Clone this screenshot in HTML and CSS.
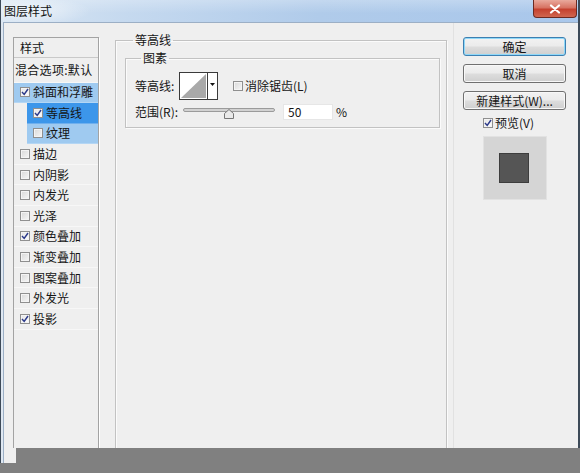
FILE: index.html
```html
<!DOCTYPE html>
<html lang="zh">
<head>
<meta charset="utf-8">
<title>图层样式</title>
<link rel="stylesheet" href="styles.css">
</head>
<body>
<div class="win">
  <div class="titlebar">
    <span class="title">图层样式</span>
    <span class="close"><svg width="12" height="10" viewBox="0 0 12 10"><path d="M2 1.5 L10 8.5 M10 1.5 L2 8.5" stroke="#fff" stroke-width="2.2" stroke-linecap="round"/></svg></span>
  </div>
  <div class="client">
    <div class="list">
      <div class="row head">样式</div>
      <div class="row blend">混合选项:默认</div>
      <div class="row sel-light"><span class="cb on"><svg width="8" height="8" viewBox="0 0 8 8"><path d="M1 4 L3.2 6.4 L7 1" fill="none" stroke="#2c3a8a" stroke-width="1.5"/></svg></span>斜面和浮雕</div>
      <div class="row sub sel-dark"><span class="cb on"><svg width="8" height="8" viewBox="0 0 8 8"><path d="M1 4 L3.2 6.4 L7 1" fill="none" stroke="#2c3a8a" stroke-width="1.5"/></svg></span>等高线</div>
      <div class="row sub sel-light"><span class="cb"></span>纹理</div>
      <div class="row"><span class="cb"></span>描边</div>
      <div class="row"><span class="cb"></span>内阴影</div>
      <div class="row"><span class="cb"></span>内发光</div>
      <div class="row"><span class="cb"></span>光泽</div>
      <div class="row"><span class="cb on"><svg width="8" height="8" viewBox="0 0 8 8"><path d="M1 4 L3.2 6.4 L7 1" fill="none" stroke="#2c3a8a" stroke-width="1.5"/></svg></span>颜色叠加</div>
      <div class="row"><span class="cb"></span>渐变叠加</div>
      <div class="row"><span class="cb"></span>图案叠加</div>
      <div class="row"><span class="cb"></span>外发光</div>
      <div class="row"><span class="cb on"><svg width="8" height="8" viewBox="0 0 8 8"><path d="M1 4 L3.2 6.4 L7 1" fill="none" stroke="#2c3a8a" stroke-width="1.5"/></svg></span>投影</div>
    </div>

    <fieldset class="grp outer">
      <legend>等高线</legend>
      <fieldset class="grp inner">
        <legend>图素</legend>
        <div class="line first">
          <span class="lbl">等高线:</span>
          <span class="contour">
            <svg width="39" height="28" viewBox="0 0 39 28">
              <rect x="0.5" y="0.5" width="38" height="27" fill="#fff" stroke="#3a3a3a"/>
              <polygon points="2,26 27,2 27,26" fill="#a9a9a9"/>
              <line x1="28.5" y1="1" x2="28.5" y2="27" stroke="#3a3a3a"/>
              <polygon points="31,11 36,11 33.5,14" fill="#111"/>
            </svg>
          </span>
          <span class="chk"><span class="cb"></span>消除锯齿(L)</span>
        </div>
        <div class="line second">
          <span class="lbl lbl2">范围(R):</span>
          <svg class="slider" width="92" height="16" viewBox="0 0 92 16">
            <rect x="0.5" y="4.5" width="91" height="3" rx="1.5" fill="#d2d2d2" stroke="#9b9b9b"/>
            <polygon points="41.5,14.5 41.5,9.5 46,5.5 50.5,9.5 50.5,14.5" fill="#eaeaea" stroke="#777"/>
          </svg>
          <span class="input">50</span>
          <span class="pct">%</span>
        </div>
      </fieldset>
    </fieldset>

    <div class="side">
      <div class="btn default">确定</div>
      <div class="btn">取消</div>
      <div class="btn">新建样式(W)...</div>
      <div class="chk preview-chk"><span class="cb on"><svg width="8" height="8" viewBox="0 0 8 8"><path d="M1 4 L3.2 6.4 L7 1" fill="none" stroke="#2c3a8a" stroke-width="1.5"/></svg></span>预览(V)</div>
      <div class="preview"><div class="sq"></div></div>
    </div>
  </div>
</div>
<div class="cutoff"><span class="corner"></span><span class="gray"></span></div>
</body>
</html>
```

FILE: styles.css
```css
* { box-sizing: border-box; }
html, body { margin: 0; padding: 0; }
body {
  width: 580px;
  height: 473px;
  overflow: hidden;
  background: #808080;
  font-family: "Noto Sans CJK SC", "Noto Sans", "Liberation Sans", sans-serif;
  font-size: 12px;
  color: #151515;
}

.win {
  width: 580px;
  height: 448px;
  display: flex;
  flex-direction: column;
  border-left: 1px solid #3d4a58;
  border-right: 2px solid #3d4a58;
  background: #dfe8f2;
  padding: 0 0 0 2px;
  overflow: hidden;
}

.titlebar {
  flex: none;
  height: 22px;
  margin-left: -2px;
  display: flex;
  align-items: flex-start;
  background:
    radial-gradient(ellipse 60px 14px at 30px 11px, rgba(255,255,255,0.55), rgba(255,255,255,0)),
    linear-gradient(180deg, rgba(255,255,255,0.25), rgba(255,255,255,0) 60%),
    linear-gradient(90deg, #d9e6f3 0%, #c5d9ef 22%, #b0cbea 55%, #a9c7eb 100%);
}
.title {
  margin: 3px 0 0 3px;
  line-height: 16px;
  font-size: 12px;
  color: #111;
}
.close {
  margin-left: auto;
  margin-right: 1px;
  width: 44px;
  height: 18px;
  display: flex;
  align-items: center;
  justify-content: center;
  border: 1px solid #6b2a22;
  border-top: none;
  border-radius: 0 0 4px 4px;
  background: linear-gradient(180deg, #e9a99c 0%, #d77363 45%, #c5412f 55%, #d0664f 100%);
}

.client {
  flex: 1;
  min-height: 0;
  overflow: hidden;
  display: flex;
  align-items: flex-start;
  background: #efefef;
  border-top: 1px solid #9cafc5;
  border-left: 1px solid #9cafc5;
  padding: 14px 0 0 9px;
}

/* left list */
.list {
  width: 86px;
  height: 420px;
  border: 1px solid #a3a3a3;
  box-shadow: 1px 1px 0 #ffffff;
  background: #efefef;
  flex: none;
}
.row {
  height: 20.6px;
  display: flex;
  align-items: center;
  padding-left: 6px;
  line-height: 14px;
  border-bottom: 1px solid #f7f7f7;
  white-space: nowrap;
}
.row.head {
  height: 20px;
  border-bottom: 1px solid #c9c9c9;
}
.row.blend {
  height: 24.5px;
  padding-left: 1px;
  letter-spacing: 0.3px;
}
.row.sub { margin-left: 13px; }
.sel-light { background: #9fcaf0; border-bottom-color: #b4d6f4; }
.sel-dark { background: #3c96ea; border-bottom-color: #6fb0ee; }

.cb {
  width: 10px;
  height: 10px;
  flex: none;
  margin-right: 3px;
  border: 1px solid #8f8f8f;
  background: linear-gradient(135deg, #d8d8d8, #f7f7f7);
  box-shadow: inset 0 0 0 1px #f4f4f4;
  display: inline-flex;
  align-items: center;
  justify-content: center;
}
.cb.on { background: linear-gradient(135deg, #e4e4e4, #ffffff); }

/* group boxes */
.grp {
  margin: 0;
  border: 1px solid #c2c2c2;
  box-shadow: inset 1px 1px 0 #fbfbfb, 1px 1px 0 #fbfbfb;
}
.grp legend {
  padding: 0 2px;
  line-height: 14px;
  height: 14px;
}
.outer {
  width: 332px;
  height: 430px;
  margin-top: -4px;
  margin-left: 16px;
  padding: 4px 6px 0 9px;
  flex: none;
}
.outer > legend { margin-left: 8px; }
.inner {
  padding: 7px 9px 7px 9px;
}
.inner > legend { margin-left: 6px; }

.line {
  display: flex;
  align-items: center;
}
.line.first { height: 28px; }
.line.second { height: 16px; margin-top: 4px; }
.lbl { width: 44px; line-height: 14px; flex: none; }
.lbl2 { width: 48px; }
.contour { display: block; width: 39px; height: 28px; }
.contour svg { display: block; }
.chk {
  display: flex;
  align-items: center;
  margin-left: 15px;
  line-height: 14px;
}
.chk .cb { margin-right: 2px; }
.slider { display: block; flex: none; }
.input {
  width: 50px;
  height: 16px;
  margin-left: 8px;
  padding-left: 4px;
  background: #fff;
  border: 1px solid #e6e6e6;
  line-height: 14px;
}
.pct { margin-left: 3px; line-height: 14px; }

/* right side */
.side {
  flex: none;
  margin-left: 6px;
  margin-top: -14px;
  height: 440px;
  border-left: 1px solid #e1e1e1;
  padding: 14px 0 0 9px;
  display: flex;
  flex-direction: column;
}
.btn {
  width: 103px;
  height: 19px;
  margin-bottom: 8px;
  display: flex;
  align-items: center;
  justify-content: center;
  line-height: 14px;
  border: 1px solid #707070;
  border-radius: 3px;
  background: linear-gradient(180deg, #f2f2f2 0%, #ebebeb 48%, #dddddd 52%, #cfcfcf 100%);
  box-shadow: inset 0 0 0 1px #f8f8f8;
}
.btn.default {
  border-color: #3c7fb1;
  box-shadow: inset 0 0 0 1px #8fd8f8;
}
.preview-chk {
  margin: -2px 0 0 20px;
  height: 14px;
}
.preview {
  margin: 6px 0 0 20px;
  width: 64px;
  height: 64px;
  background: #d5d5d5;
  border: 1px solid #e2e2e2;
  padding: 16px 0 0 15px;
}
.sq {
  width: 30px;
  height: 30px;
  background: #555555;
  border: 1px solid #3d3d3d;
}

/* cut-off strip at the bottom */
.cutoff {
  height: 25px;
  display: flex;
}
.corner {
  width: 16px;
  height: 25px;
  background:
    linear-gradient(#808080, #808080) bottom / 100% 10px no-repeat,
    linear-gradient(90deg, #3d4a58 0 1px, #dfe8f2 1px 3px, #9cafc5 3px 4px, #efefef 4px);
}
.gray { flex: 1; background: #808080; }
```
